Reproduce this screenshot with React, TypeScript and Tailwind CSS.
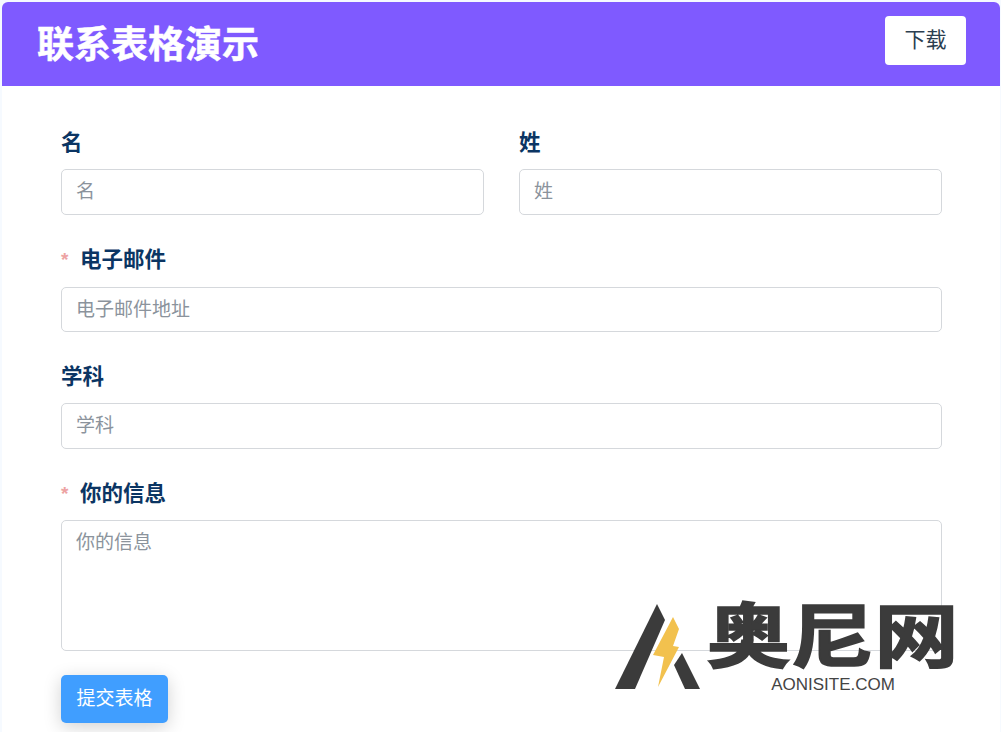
const cjk = "font-['Liberation_Sans','Noto_Sans_CJK_SC',sans-serif]";

function Label({ text, required }: { text: string; required?: boolean }) {
  return (
    <label className="flex h-[26px] items-center pt-[1px] text-[21.5px] leading-[26px] font-bold text-[#0b3563]">
      {required && <span className="mr-[10px] w-[9px] text-[19px] font-bold text-[#eda3a3]">*</span>}
      {text}
    </label>
  );
}

function Field({ label, required, h = "h-[46px]", gap = "gap-[14px]" }: { label: string; required?: boolean; h?: string; gap?: string }) {
  return (
    <div className={`flex flex-col ${gap}`}>
      <Label text={label} required={required} />
      <input
        placeholder={label === "电子邮件" ? "电子邮件地址" : label}
        className={`${h} w-full rounded-[5px] border border-[#d5d8dc] bg-white px-[14px] text-[19px] outline-none placeholder:text-[#8b939c]`}
      />
    </div>
  );
}

export default function App() {
  return (
    <div className={`${cjk} relative h-[732px] overflow-hidden bg-[#f6faff] pt-[2px] pr-[1px] pl-[2px]`}>
      <div className="h-full rounded-t-[6px] bg-white">
        {/* 顶部 */}
        <header className="flex h-[84px] items-center justify-between rounded-t-[6px] bg-[#7f5aff] pr-[34px] pl-[35px]">
          <h1 className="pt-[2px] text-[37px] leading-none font-bold text-white [-webkit-text-stroke:0.5px_#fff]">联系表格演示</h1>
          <button className="mb-[8px] h-[49px] w-[81px] rounded-[4px] bg-white text-[21px] text-[#2c3e50]">下载</button>
        </header>

        {/* 表单 */}
        <form className="flex flex-col gap-[31px] pt-[43px] pr-[58px] pl-[59px]">
          <div className="grid grid-cols-2 gap-[35px]">
            <Field label="名" />
            <Field label="姓" />
          </div>
          <Field label="电子邮件" required h="h-[45px]" gap="gap-[15px]" />
          <Field label="学科" />
          <div className="flex flex-col gap-[24px]">
            <div className="flex flex-col gap-[14px]">
              <Label text="你的信息" required />
              <textarea
                placeholder="你的信息"
                className="h-[131px] w-full resize-none rounded-[5px] border border-[#d5d8dc] bg-white px-[14px] py-[9px] text-[19px] leading-[26px] outline-none placeholder:text-[#8b939c]"
              />
            </div>
            <button
              type="button"
              className="h-[48px] w-[107px] rounded-[5px] bg-[#409eff] text-[19px] text-white shadow-[0_4px_18px_rgba(0,0,0,0.18)]"
            >
              提交表格
            </button>
          </div>
        </form>
      </div>

      {/* 水印 */}
      <div className="absolute top-[602px] left-[614px] flex h-[90px] w-[345px]">
        <svg width="88" height="88" viewBox="0 0 88 88" className="shrink-0">
          <path d="M1 87 L43 2 L51 18 L21 87 Z" fill="#3b3b3b" />
          <path d="M68 51 L86 87 L71 87 L60 63 Z" fill="#3b3b3b" />
          <path d="M59 15 L65 27 L59 44 L65 45 L44 85 L50 55 L39 53 Z" fill="#f2c14e" />
        </svg>
        <div className="flex w-[257px] flex-col items-center">
          <span className="ml-[4px] h-[68px] origin-top scale-y-[0.84] pt-[4px] text-[84px] leading-[78px] font-bold whitespace-nowrap text-[#3b3b3b] [-webkit-text-stroke:2px_#3b3b3b]">奥尼网</span>
          <span className="mt-[6px] ml-[5px] text-[17px] leading-[18px] text-[#444]">AONISITE.COM</span>
        </div>
      </div>
    </div>
  );
}
